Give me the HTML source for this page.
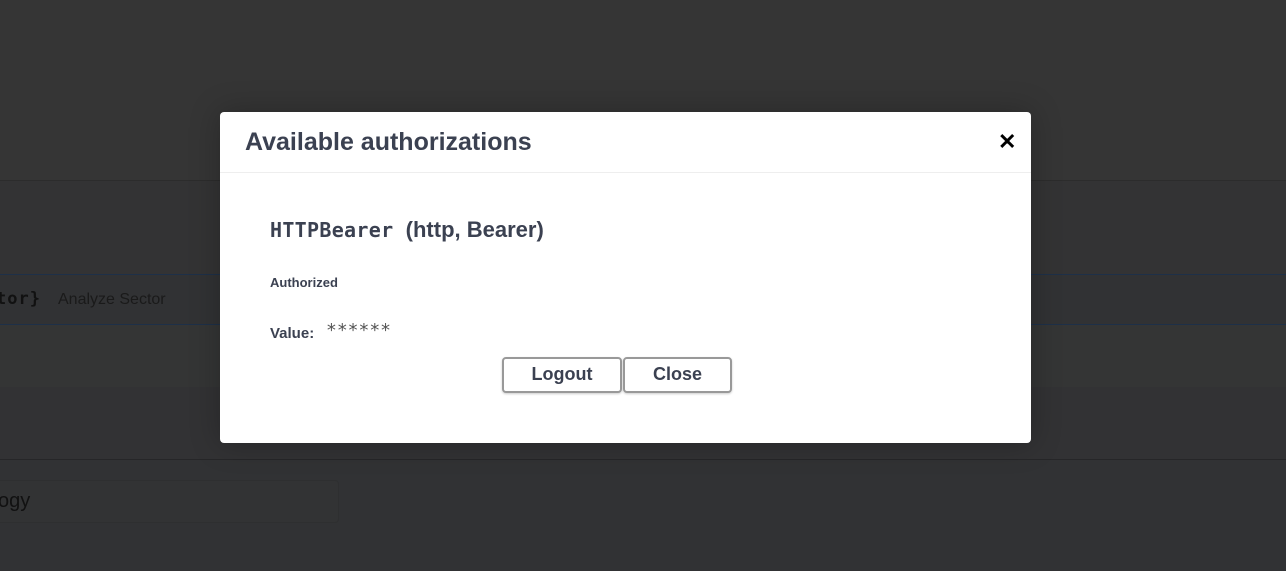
<!DOCTYPE html>
<html><head><style>
body{margin:0;width:1286px;height:571px;background:#323233;font-family:"Liberation Sans",sans-serif;position:relative;overflow:hidden}
.b{position:absolute;left:0;width:1286px}
.modal{position:absolute;left:220px;top:112px;width:811px;height:331px;background:#fff;border-radius:4px;box-shadow:0 0 30px rgba(0,0,0,.25)}
.hd{height:60px;border-bottom:1px solid #eee;position:relative}
.hd h3{margin:0;position:absolute;left:25px;top:16px;font-size:25px;font-weight:bold;color:#3b4151}
.x{position:absolute;left:778px;top:17px;font-size:22px;font-weight:bold;color:#000}
.t{position:absolute;color:#3b4151}
.btn{position:absolute;top:245px;height:36px;border:2px solid #999;border-radius:4px;box-sizing:border-box;font-size:18px;font-weight:bold;color:#3b4151;text-align:center;line-height:31px;background:#fff;box-shadow:0 1px 2px rgba(0,0,0,.2)}
</style></head><body>
<div class="b" style="top:0;height:180px;background:#353535"></div>
<div class="b" style="top:180px;height:1px;background:#2c2c2c"></div>
<div class="b" style="top:181px;height:93px;background:#333334"></div>
<div class="b" style="top:274px;height:51px;background:#313234;border-top:1px solid #1e3048;border-bottom:1px solid #1e3048;box-sizing:border-box"></div>
<div class="b" style="top:325px;height:62px;background:#343535"></div>
<div class="b" style="top:387px;height:72px;background:#323234"></div>
<div class="b" style="top:459px;height:1px;background:#262628"></div>
<div class="b" style="top:460px;height:111px;background:#313234"></div>
<div style="position:absolute;left:-10px;top:480px;width:349px;height:43px;border:1px solid #2e2f30;border-radius:4px;background:#323334;box-sizing:border-box"></div>
<div style="position:absolute;left:-2px;top:490px;font-size:20px;color:#111">ogy</div>
<div style="position:absolute;left:-4px;top:289px;font-family:'DejaVu Sans Mono',monospace;font-weight:bold;font-size:17px;color:#111;letter-spacing:1px">tor}</div>
<div style="position:absolute;left:58px;top:291px;font-size:16px;color:#1a1a1a">Analyze Sector</div>
<div class="modal">
<div class="hd"><h3>Available authorizations</h3><div class="x">✕</div></div>
<div class="t" style="left:50px;top:105px;font-size:22px;font-weight:bold;white-space:nowrap"><span style="font-family:'DejaVu Sans Mono',monospace;font-size:20px;font-weight:bold;letter-spacing:0.3px">HTTPBearer</span>&nbsp; (http, Bearer)</div>
<div class="t" style="left:50px;top:163px;font-size:13px;font-weight:bold">Authorized</div>
<div class="t" style="left:50px;top:213px;font-size:15px;font-weight:bold">Value:</div>
<div class="t" style="left:106px;top:208px;font-size:18px;font-family:'DejaVu Sans Mono',monospace;color:#555">******</div>
<div class="btn" style="left:282px;width:120px">Logout</div>
<div class="btn" style="left:403px;width:109px">Close</div>
</div>
</body></html>
